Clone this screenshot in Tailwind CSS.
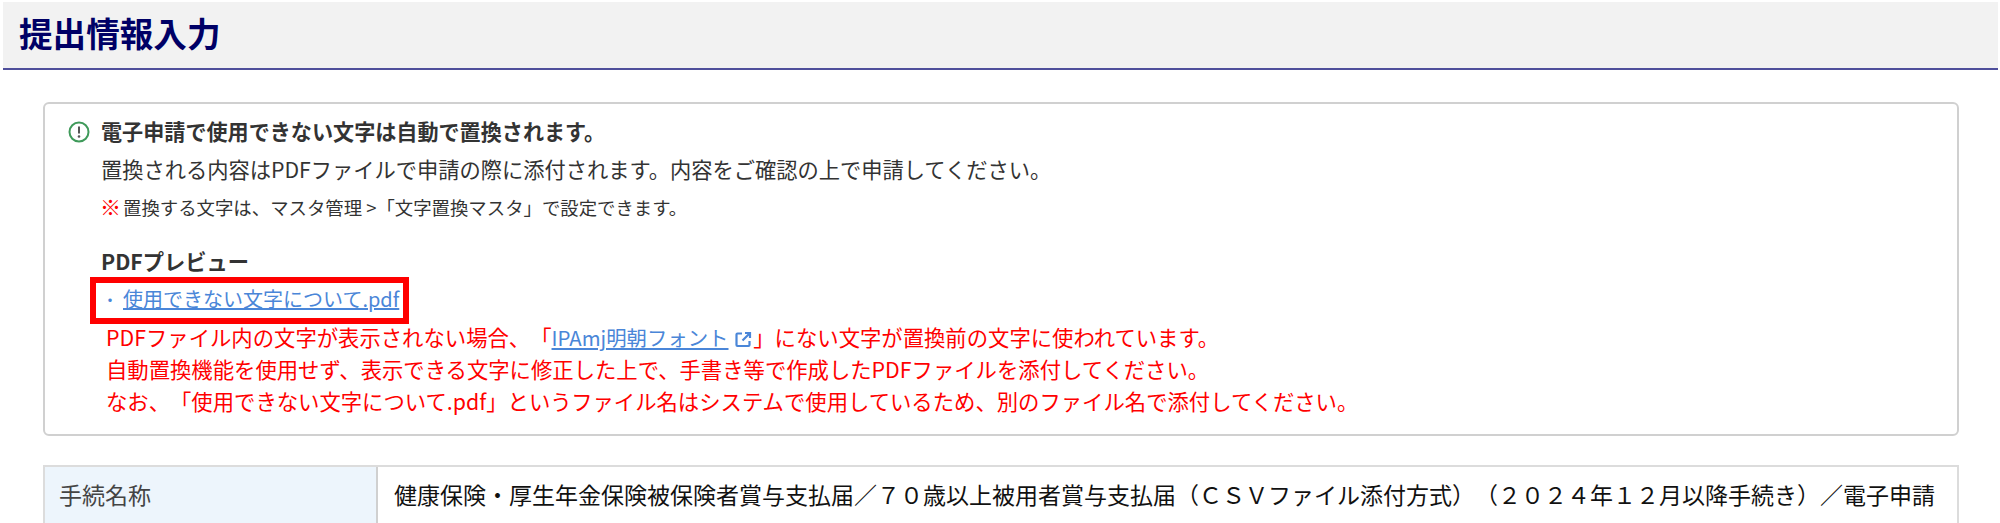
<!DOCTYPE html>
<html lang="ja">
<head>
    <meta charset="UTF-8">
    <title>提出情報入力</title>
    <script src="https://cdn.jsdelivr.net/npm/@tailwindcss/browser@4"></script>
</head>
<body class="bg-white h-[523px] overflow-hidden font-['Noto_Sans_CJK_JP','Noto_Sans',sans-serif] text-[#333] [text-spacing-trim:space-all]">
    <!-- 見出し -->
    <div class="ml-[3px] mt-[2px] mr-[2px] h-[68px] bg-[#f2f2f2] border-b-2 border-[#4f4f9b] flex items-center pl-[16px] pb-[4px]">
        <h1 class="text-[33.6px] font-bold text-[#000066]">提出情報入力</h1>
    </div>

    <div class="ml-[43px] w-[1916px] mt-[32px]">
        <!-- 注意事項 -->
        <div class="h-[334px] border-2 border-[#d0d0d0] rounded-[6px] pl-[24px] pt-[12px]">
            <div class="flex items-center h-[32px] gap-[11px]">
                <svg class="w-[22px] h-[22px] -ml-[1px]" viewBox="0 0 22 22" fill="none">
                    <circle cx="11" cy="11" r="9.5" stroke="#3f9a5a" stroke-width="2"/>
                    <path d="M11 5.5v7" stroke="#555" stroke-width="2"/>
                    <circle cx="11" cy="15.5" r="1.3" fill="#555"/>
                </svg>
                <p class="text-[21.1px] font-bold">電子申請で使用できない文字は自動で置換されます。</p>
            </div>
            <div class="pl-[32px]">
                <p class="text-[21.25px] leading-[32px] mt-[5px]">置換される内容はPDFファイルで申請の際に添付されます。内容をご確認の上で申請してください。</p>
                <p class="text-[18.4px] leading-[28px] mt-[7px]"><span class="text-[#ff0000] font-bold text-[21px] -ml-[1px] mr-[2px]">※</span>置換する文字は、マスタ管理 &gt;「文字置換マスタ」で設定できます。</p>
                <p class="text-[21.25px] font-bold leading-[32px] mt-[24px]">PDFプレビュー</p>
            </div>
            <div class="ml-[21px] w-[319px] h-[47px] border-[6px] border-[#ff0000] flex items-center pl-[4px] pb-[4px] text-[20px] text-[#4a86d8] whitespace-nowrap">
                <span class="w-[20px] text-center text-[16px]">・</span>
                <a href="#" class="underline ml-[3px]">使用できない文字について.pdf</a>
            </div>
            <div class="-mt-[3px] pl-[37px] text-[21.35px] leading-[32px] text-[#ff0000] whitespace-nowrap">
                <p>PDFファイル内の文字が表示されない場合、「<a href="#" class="text-[#4a86d8] underline text-[20.4px]">IPAmj明朝フォント</a>
                    <svg class="inline-block w-[17px] h-[17px] ml-[2px] mr-[1px] align-[-2px]" viewBox="0 0 17 17" fill="none" stroke="#4a86d8" stroke-width="2.2">
                        <path d="M7 2.5H2.5a1 1 0 0 0-1 1v10.500a1 1 0 0 0 1 1H13.500a1 1 0 0 0 1-1V10"/>
                        <path d="M10 2h5v5M15 2L7.500 9.500"/>
                    </svg>」にない文字が置換前の文字に使われています。</p>
                <p>自動置換機能を使用せず、表示できる文字に修正した上で、手書き等で作成したPDFファイルを添付してください。</p>
                <p>なお、「使用できない文字について.pdf」というファイル名はシステムで使用しているため、別のファイル名で添付してください。</p>
            </div>
        </div>

        <!-- 手続情報 -->
        <div class="mt-[29px] h-[60px] flex border-t-2 border-x-2 border-[#dcdcdc] whitespace-nowrap">
            <div class="w-[333px] bg-[#edf5fc] border-r-2 border-[#d0d0d0] pl-[14px] pb-[6px] flex items-center h-[60px] text-[23px] text-[#444]">手続名称</div>
            <div class="flex-1 pl-[16px] pb-[6px] flex items-center h-[60px] text-[23px] text-[#111]">健康保険・厚生年金保険被保険者賞与支払届／７０歳以上被用者賞与支払届（ＣＳＶファイル添付方式）（２０２４年１２月以降手続き）／電子申請</div>
        </div>
    </div>
</body>
</html>
